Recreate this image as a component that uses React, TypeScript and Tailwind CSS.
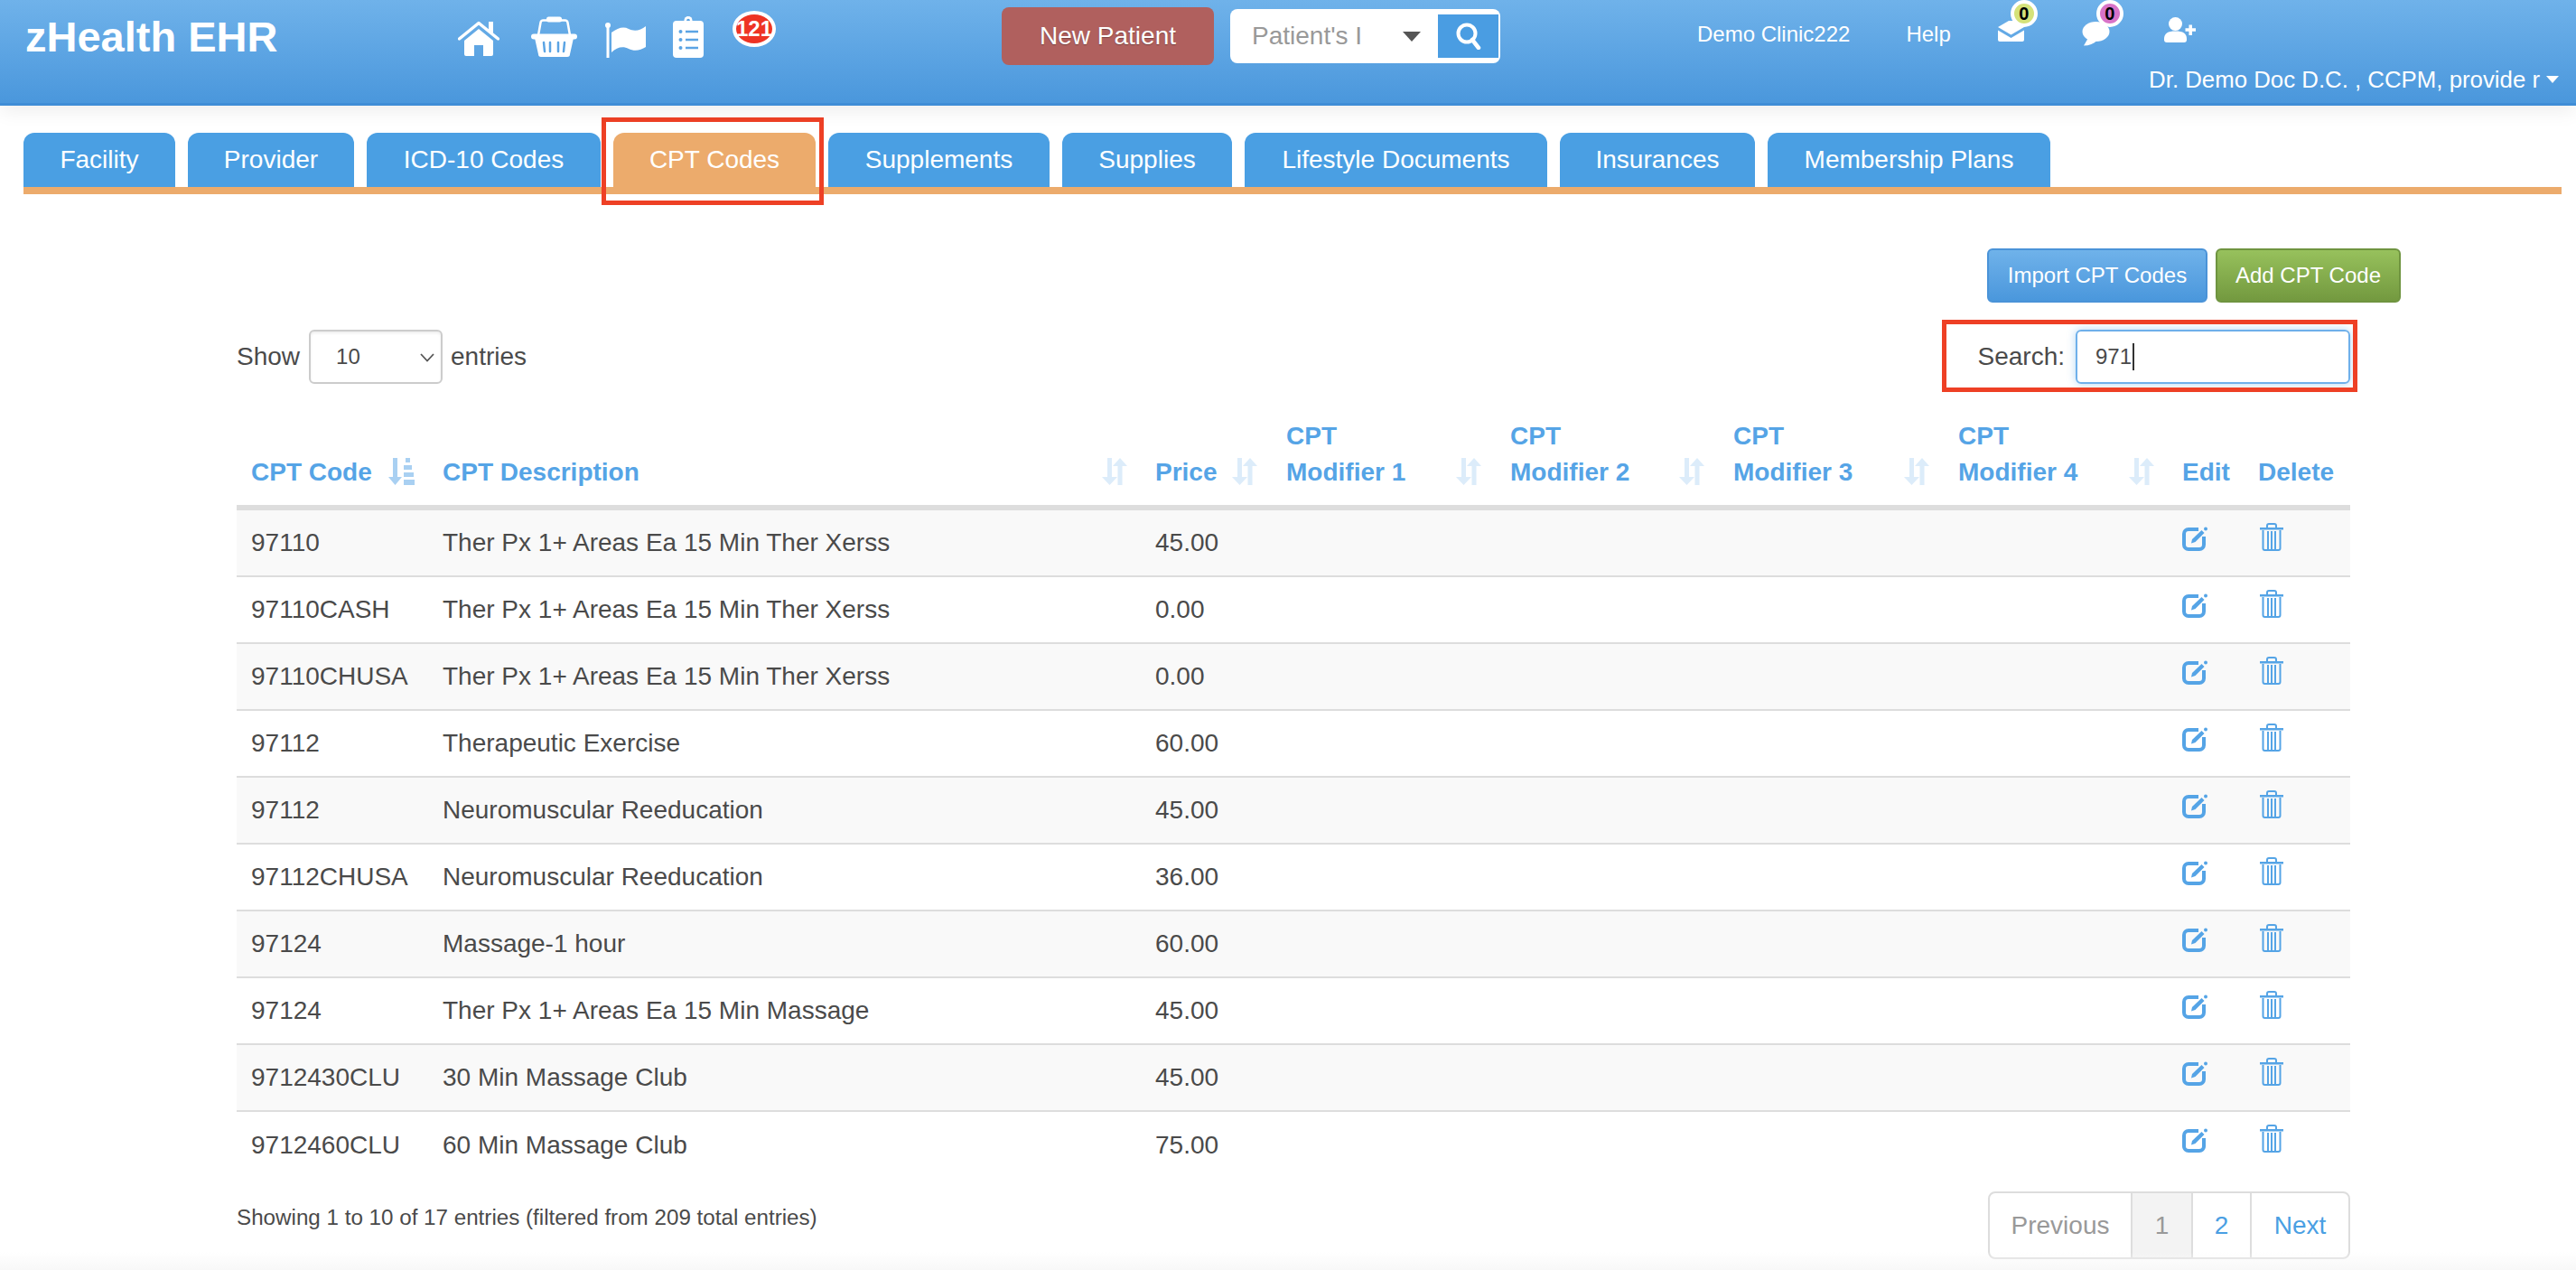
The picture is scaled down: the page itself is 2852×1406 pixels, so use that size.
const tabs = [
  { label: "Facility", width: "w-[168px]" },
  { label: "Provider", width: "w-[184px]" },
  { label: "ICD-10 Codes", width: "w-[259px]" },
  { label: "CPT Codes", width: "w-[224px]" },
  { label: "Supplements", width: "w-[245px]" },
  { label: "Supplies", width: "w-[188px]" },
  { label: "Lifestyle Documents", width: "w-[335px]" },
  { label: "Insurances", width: "w-[216px]" },
  { label: "Membership Plans", width: "w-[313px]" },
]

const rows = [
  ["97110", "Ther Px 1+ Areas Ea 15 Min Ther Xerss", "45.00"],
  ["97110CASH", "Ther Px 1+ Areas Ea 15 Min Ther Xerss", "0.00"],
  ["97110CHUSA", "Ther Px 1+ Areas Ea 15 Min Ther Xerss", "0.00"],
  ["97112", "Therapeutic Exercise", "60.00"],
  ["97112", "Neuromuscular Reeducation", "45.00"],
  ["97112CHUSA", "Neuromuscular Reeducation", "36.00"],
  ["97124", "Massage-1 hour", "60.00"],
  ["97124", "Ther Px 1+ Areas Ea 15 Min Massage", "45.00"],
  ["9712430CLU", "30 Min Massage Club", "45.00"],
  ["9712460CLU", "60 Min Massage Club", "75.00"],
]

function HomeIcon() {
  return (
    <svg width="46" height="39" viewBox="0 0 46 39" className="mt-[23px] shrink-0">
      <rect x="34" y="1" width="5" height="12" fill="#fff" />
      <path d="M1.5 20 23 2.5 44.5 20" fill="none" stroke="#fff" strokeWidth="3.5" strokeLinecap="round" strokeLinejoin="round" />
      <path d="M7 22 23 9l16 13v15a2 2 0 0 1-2 2h-9V27H18v12H9a2 2 0 0 1-2-2z" fill="#fff" />
    </svg>
  )
}

function BasketIcon() {
  return (
    <svg width="51" height="45" viewBox="0 0 51 45" className="mt-[18px] ml-[35px] shrink-0">
      <path d="M8 21 10.5 7a3 3 0 0 1 3-2.500h24a3 3 0 0 1 3 2.500L43 21" fill="none" stroke="#fff" strokeWidth="2.500" />
      <rect x="17" y="0.500" width="17" height="6" rx="2.500" fill="#fff" />
      <rect x="0" y="19.500" width="51" height="6" rx="3" fill="#fff" />
      <path d="M4 24h43l-4 18a3 3 0 0 1-3 3H11a3 3 0 0 1-3-3z" fill="#fff" />
      <path d="M14 29l1 10M21 29v10M30 29v10M37 29l-1 10" stroke="#5ba4e4" strokeWidth="2.500" strokeLinecap="round" />
    </svg>
  )
}

function FlagIcon() {
  return (
    <svg width="45" height="39" viewBox="0 0 45 39" className="mt-[25px] ml-[31px] shrink-0">
      <circle cx="3" cy="3" r="3" fill="#fff" />
      <rect x="1.500" y="3" width="3" height="36" fill="#fff" />
      <path d="M7 11C14 6 20 4 26 7c6 3 13 2 19-3v23c-6 4-13 5-19 2-6-3-13-2-19 4z" fill="#fff" />
    </svg>
  )
}

function ClipboardIcon() {
  return (
    <svg width="34" height="46" viewBox="0 0 34 46" className="mt-[18px] ml-[30px] shrink-0">
      <circle cx="17" cy="4.500" r="4.500" fill="#fff" />
      <circle cx="17" cy="4.500" r="1.800" fill="#5ba4e4" />
      <rect x="0" y="5" width="34" height="41" rx="4" fill="#fff" />
      <circle cx="8.500" cy="17" r="2" fill="#5ba4e4" />
      <circle cx="8.500" cy="26" r="2" fill="#5ba4e4" />
      <circle cx="8.500" cy="35" r="2" fill="#5ba4e4" />
      <path d="M14 17h14M14 26h14M14 35h14" stroke="#5ba4e4" strokeWidth="2.500" />
    </svg>
  )
}

function MailIcon() {
  return (
    <svg width="29" height="23" viewBox="0 0 29 23" className="block">
      <path d="M0 7 12 0h17v7l-14.500 8.500z" fill="#fff" />
      <path d="M0 10.500 14.500 19 29 10.500V21a2 2 0 0 1-2 2H2a2 2 0 0 1-2-2z" fill="#fff" />
    </svg>
  )
}

function ChatIcon() {
  return (
    <svg width="31" height="27" viewBox="0 0 31 27" className="block">
      <ellipse cx="15.500" cy="11" rx="15" ry="11" fill="#fff" />
      <path d="M7 18 2 26.500c6 0 11-2 15-6z" fill="#fff" />
    </svg>
  )
}

function UserPlusIcon() {
  return (
    <svg width="35" height="28" viewBox="0 0 35 28" className="block">
      <circle cx="12.500" cy="7.500" r="7.500" fill="#fff" />
      <path d="M0 24c0-6 4-8.500 12.500-8.500S25 18 25 24v1a3 3 0 0 1-3 3H3a3 3 0 0 1-3-3z" fill="#fff" />
      <path d="M23.500 14h11.500M29.200 8.500v11.500" stroke="#fff" strokeWidth="3.500" />
    </svg>
  )
}

function CountBadge({ color, top }: { color: string; top: string }) {
  return (
    <span className={`absolute -right-[15px] flex h-[30px] w-[30px] items-center justify-center rounded-full border-[4px] border-white text-[20px] leading-none font-bold text-black ${top} ${color}`}>
      0
    </span>
  )
}

function SortIcon() {
  return (
    <svg width="28" height="30" viewBox="0 0 28 30" className="mb-[6px] shrink-0">
      <path d="M6 0h5v21h6l-8.500 9L0 21h6z" fill="#dcecfa" />
      <path d="M20 0l8 9h-5.500v21h-5V9H12z" fill="#dcecfa" />
    </svg>
  )
}

function SortedIcon() {
  return (
    <svg width="29" height="30" viewBox="0 0 29 30" className="mb-[6px] shrink-0">
      <path d="M5 0h5v21h5l-7.500 9L0 21h5z" fill="#a9d0f2" />
      <rect x="19" y="0" width="5" height="5" fill="#a9d0f2" />
      <rect x="17" y="8" width="9" height="5" fill="#a9d0f2" />
      <rect x="17" y="16" width="11" height="5" fill="#a9d0f2" />
      <rect x="17" y="24" width="12" height="6" fill="#a9d0f2" />
    </svg>
  )
}

function EditIcon() {
  return (
    <svg width="28" height="31" viewBox="0 0 28 31" className="block">
      <path d="M18 7H7a5 5 0 0 0-5 5v12a5 5 0 0 0 5 5h12a5 5 0 0 0 5-5v-9" fill="none" stroke="#55a4e6" strokeWidth="4" />
      <path d="M10 22.500l1-4.500L21.500 8l3 3L14.500 21z" fill="#55a4e6" />
      <circle cx="26" cy="6.500" r="2" fill="#55a4e6" />
    </svg>
  )
}

function TrashIcon() {
  return (
    <svg width="26" height="31" viewBox="0 0 26 31" className="block">
      <path d="M8 5V3a2 2 0 0 1 2-2h6a2 2 0 0 1 2 2v2" fill="none" stroke="#55a4e6" strokeWidth="2" />
      <rect x="0" y="5" width="26" height="2.500" fill="#55a4e6" />
      <path d="M3.500 8v20a2 2 0 0 0 2 2h15a2 2 0 0 0 2-2V8" fill="none" stroke="#55a4e6" strokeWidth="2" />
      <path d="M9 9v20M13 9v20M17 9v20" stroke="#55a4e6" strokeWidth="2" />
    </svg>
  )
}

function Header() {
  return (
    <header className="relative z-10 flex h-[117px] border-b-[3px] border-[#3f8dd6] bg-gradient-to-b from-[#6fb2ea] to-[#4a97dc] pl-[28px] text-white shadow-[0_6px_20px_rgba(0,0,0,0.07)]">
      <div className="w-[479px] shrink-0 pt-[14px] text-[47px] leading-[53px] font-bold">zHealth EHR</div>
      <HomeIcon />
      <BasketIcon />
      <FlagIcon />
      <ClipboardIcon />
      <span className="mt-[12px] ml-[32px] flex h-[40px] w-[48px] shrink-0 items-center justify-center rounded-[50%] border-[4px] border-white bg-[#ee3324] text-[24px] leading-none font-bold">
        121
      </span>

      <button className="mt-[8px] ml-[250px] h-[64px] w-[235px] shrink-0 rounded-[8px] bg-[#b0605e] text-[28px] text-white [text-shadow:0_1px_1px_rgba(0,0,0,0.3)]">
        New Patient
      </button>

      <div className="mt-[10px] ml-[18px] flex h-[60px] w-[299px] shrink-0 items-center rounded-[8px] bg-white">
        <div className="w-[148px] pl-[24px] text-[28px] whitespace-nowrap text-[#999]">Patient's I</div>
        <span className="ml-[43px] h-0 w-0 border-x-[10px] border-t-[11px] border-x-transparent border-t-[#555]" />
        <span className="ml-[19px] flex h-[48px] w-[67px] items-center justify-center bg-[#4a9de2]">
          <svg width="28" height="30" viewBox="0 0 28 30">
            <circle cx="12" cy="12" r="9.500" fill="none" stroke="#fff" strokeWidth="4" />
            <path d="M18 19l7 9" stroke="#fff" strokeWidth="4.500" strokeLinecap="round" />
          </svg>
        </span>
      </div>

      <div className="ml-[218px] flex flex-1 flex-col">
        <div className="flex h-[70px] items-start">
          <span className="mt-[23px] text-[24px] leading-[30px] whitespace-nowrap">Demo Clinic222</span>
          <span className="mt-[23px] ml-[62px] text-[24px] leading-[30px]">Help</span>
          <span className="relative mt-[23px] ml-[52px]">
            <MailIcon />
            <CountBadge color="bg-[#d5e27a]" top="-top-[23px]" />
          </span>
          <span className="relative mt-[24px] ml-[64px]">
            <ChatIcon />
            <CountBadge color="bg-[#d873c8]" top="-top-[24px]" />
          </span>
          <span className="mt-[19px] ml-[60px]">
            <UserPlusIcon />
          </span>
        </div>
        <div className="flex items-center justify-end pr-[19px] text-[25.800px] leading-[36px] whitespace-nowrap">
          Dr. Demo Doc D.C. , CCPM, provide r
          <span className="ml-[7px] h-0 w-0 border-x-[7px] border-t-[8px] border-x-transparent border-t-white" />
        </div>
      </div>
    </header>
  )
}

function Tabs() {
  return (
    <div className="mt-[30px] mr-[16px] ml-[26px] flex gap-[14px] border-b-[8px] border-[#ecab6c]">
      {tabs.map((tab) => (
        <div
          key={tab.label}
          className={`relative flex h-[60px] items-center justify-center rounded-t-[12px] text-[28px] text-white ${tab.width} ${tab.label === "CPT Codes" ? "bg-[#ecab6c]" : "bg-[#4a9fe3]"}`}
        >
          {tab.label}
          {tab.label === "CPT Codes" && (
            <span className="absolute -top-[17px] -right-[9px] -bottom-[20px] -left-[13px] border-[5px] border-[#ee4025]" />
          )}
        </div>
      ))}
    </div>
  )
}

function CptTable() {
  const modifiers = ["1", "2", "3", "4"]
  return (
    <table className="mt-[38px] w-full table-fixed border-separate border-spacing-0 text-left">
      <colgroup>
        <col className="w-[212px]" />
        <col className="w-[789px]" />
        <col className="w-[145px]" />
        <col className="w-[248px]" />
        <col className="w-[247px]" />
        <col className="w-[249px]" />
        <col className="w-[249px]" />
        <col className="w-[85px]" />
        <col className="w-[116px]" />
      </colgroup>
      <thead>
        <tr className="text-[28px] leading-[40px] font-bold text-[#55a4e6]">
          <th className="border-b-[6px] border-[#ddd] pr-[15px] pb-[16px] pl-[16px] align-bottom font-bold">
            <div className="flex items-end justify-between">CPT Code <SortedIcon /></div>
          </th>
          <th className="border-b-[6px] border-[#ddd] pr-[15px] pb-[16px] pl-[16px] align-bottom font-bold">
            <div className="flex items-end justify-between">CPT Description <SortIcon /></div>
          </th>
          <th className="border-b-[6px] border-[#ddd] pr-[16px] pb-[16px] pl-[16px] align-bottom font-bold">
            <div className="flex items-end justify-between">Price <SortIcon /></div>
          </th>
          {modifiers.map((m) => (
            <th key={m} className="border-b-[6px] border-[#ddd] pr-[16px] pb-[16px] pl-[16px] align-bottom font-bold">
              <div className="flex items-end justify-between">
                <span>CPT<br />Modifier {m}</span>
                <SortIcon />
              </div>
            </th>
          ))}
          <th className="border-b-[6px] border-[#ddd] pb-[16px] pl-[15px] align-bottom font-bold">Edit</th>
          <th className="border-b-[6px] border-[#ddd] pb-[16px] pl-[14px] align-bottom font-bold">Delete</th>
        </tr>
      </thead>
      <tbody className="text-[28px] leading-[40px] text-[#4a4a4a]">
        {rows.map((row, i) => {
          const bg = i % 2 === 0 ? "bg-[#f9f9f9]" : "bg-white"
          const line = i < rows.length - 1 ? "border-b-2 border-[#ddd]" : ""
          return (
            <tr key={i} className={bg}>
              <td className={`h-[74px] px-[16px] ${line}`}>{row[0]}</td>
              <td className={`h-[74px] px-[16px] ${line}`}>{row[1]}</td>
              <td className={`h-[74px] px-[16px] ${line}`}>{row[2]}</td>
              {modifiers.map((m) => (
                <td key={m} className={`h-[74px] ${line}`} />
              ))}
              <td className={`h-[74px] pt-[14px] pl-[15px] align-top ${line}`}><EditIcon /></td>
              <td className={`h-[74px] pt-[14px] pl-[16px] align-top ${line}`}><TrashIcon /></td>
            </tr>
          )
        })}
      </tbody>
    </table>
  )
}

function Pagination() {
  return (
    <div className="flex h-[75px] overflow-hidden rounded-[8px] border-2 border-[#ddd] bg-white text-[28px]">
      <span className="flex w-[156px] items-center justify-center text-[#999]">Previous</span>
      <span className="flex w-[67px] items-center justify-center border-l-2 border-[#ddd] bg-[#f3f3f3] text-[#999]">1</span>
      <span className="flex w-[65px] items-center justify-center border-l-2 border-[#ddd] text-[#4a9fe3]">2</span>
      <span className="flex w-[109px] items-center justify-center border-l-2 border-[#ddd] text-[#4a9fe3]">Next</span>
    </div>
  )
}

export default function App() {
  return (
    <div className="relative h-[1406px] overflow-hidden bg-white font-['Liberation_Sans',Arial,sans-serif] text-[#4a4a4a]">
      <Header />
      <Tabs />

      {/* Import / add buttons */}
      <div className="mt-[60px] flex justify-end gap-[9px] pr-[194px] text-[24px] text-white">
        <button className="h-[60px] w-[244px] rounded-[6px] border-2 border-[#4a93d8] bg-gradient-to-b from-[#6fb2ea] to-[#4a97dc]">
          Import CPT Codes
        </button>
        <button className="h-[60px] w-[205px] rounded-[6px] border-2 border-[#6f9440] bg-gradient-to-b from-[#97c15c] to-[#73993f]">
          Add CPT Code
        </button>
      </div>

      <div className="mt-[30px] mr-[250px] ml-[262px]">
        <div className="flex h-[60px] items-center justify-between text-[28px]">
          <div className="flex items-center">
            Show
            <span className="relative mr-[9px] ml-[10px] flex h-[60px] w-[148px] items-center rounded-[6px] border-2 border-[#ccc] pl-[28px] text-[24px] shadow-[inset_0_2px_3px_rgba(0,0,0,0.07)]">
              10
              <svg width="16" height="10" viewBox="0 0 16 10" className="absolute top-[24px] right-[7px]">
                <path d="M1 1l7 7.500L15 1" fill="none" stroke="#555" strokeWidth="1.800" />
              </svg>
            </span>
            entries
          </div>
          <div className="relative flex items-center">
            <span className="absolute -top-[11px] -right-[8px] -bottom-[9px] -left-[40px] border-[5px] border-[#ee4025]" />
            Search:
            <span className="ml-[12px] flex h-[60px] w-[304px] items-center rounded-[6px] border-2 border-[#6fb0ea] pl-[20px] text-[24px] shadow-[0_0_10px_rgba(102,175,233,0.5)]">
              971
              <span className="ml-[1px] h-[30px] w-[2px] bg-[#333]" />
            </span>
          </div>
        </div>

        <CptTable />

        <div className="mt-[14px] flex items-start justify-between">
          <div className="mt-[14px] text-[24.200px] leading-[30px]">Showing 1 to 10 of 17 entries (filtered from 209 total entries)</div>
          <Pagination />
        </div>
      </div>

      <div className="pointer-events-none absolute right-0 bottom-0 left-0 h-[20px] bg-gradient-to-b from-transparent to-[#f8f8f8]" />
    </div>
  )
}
